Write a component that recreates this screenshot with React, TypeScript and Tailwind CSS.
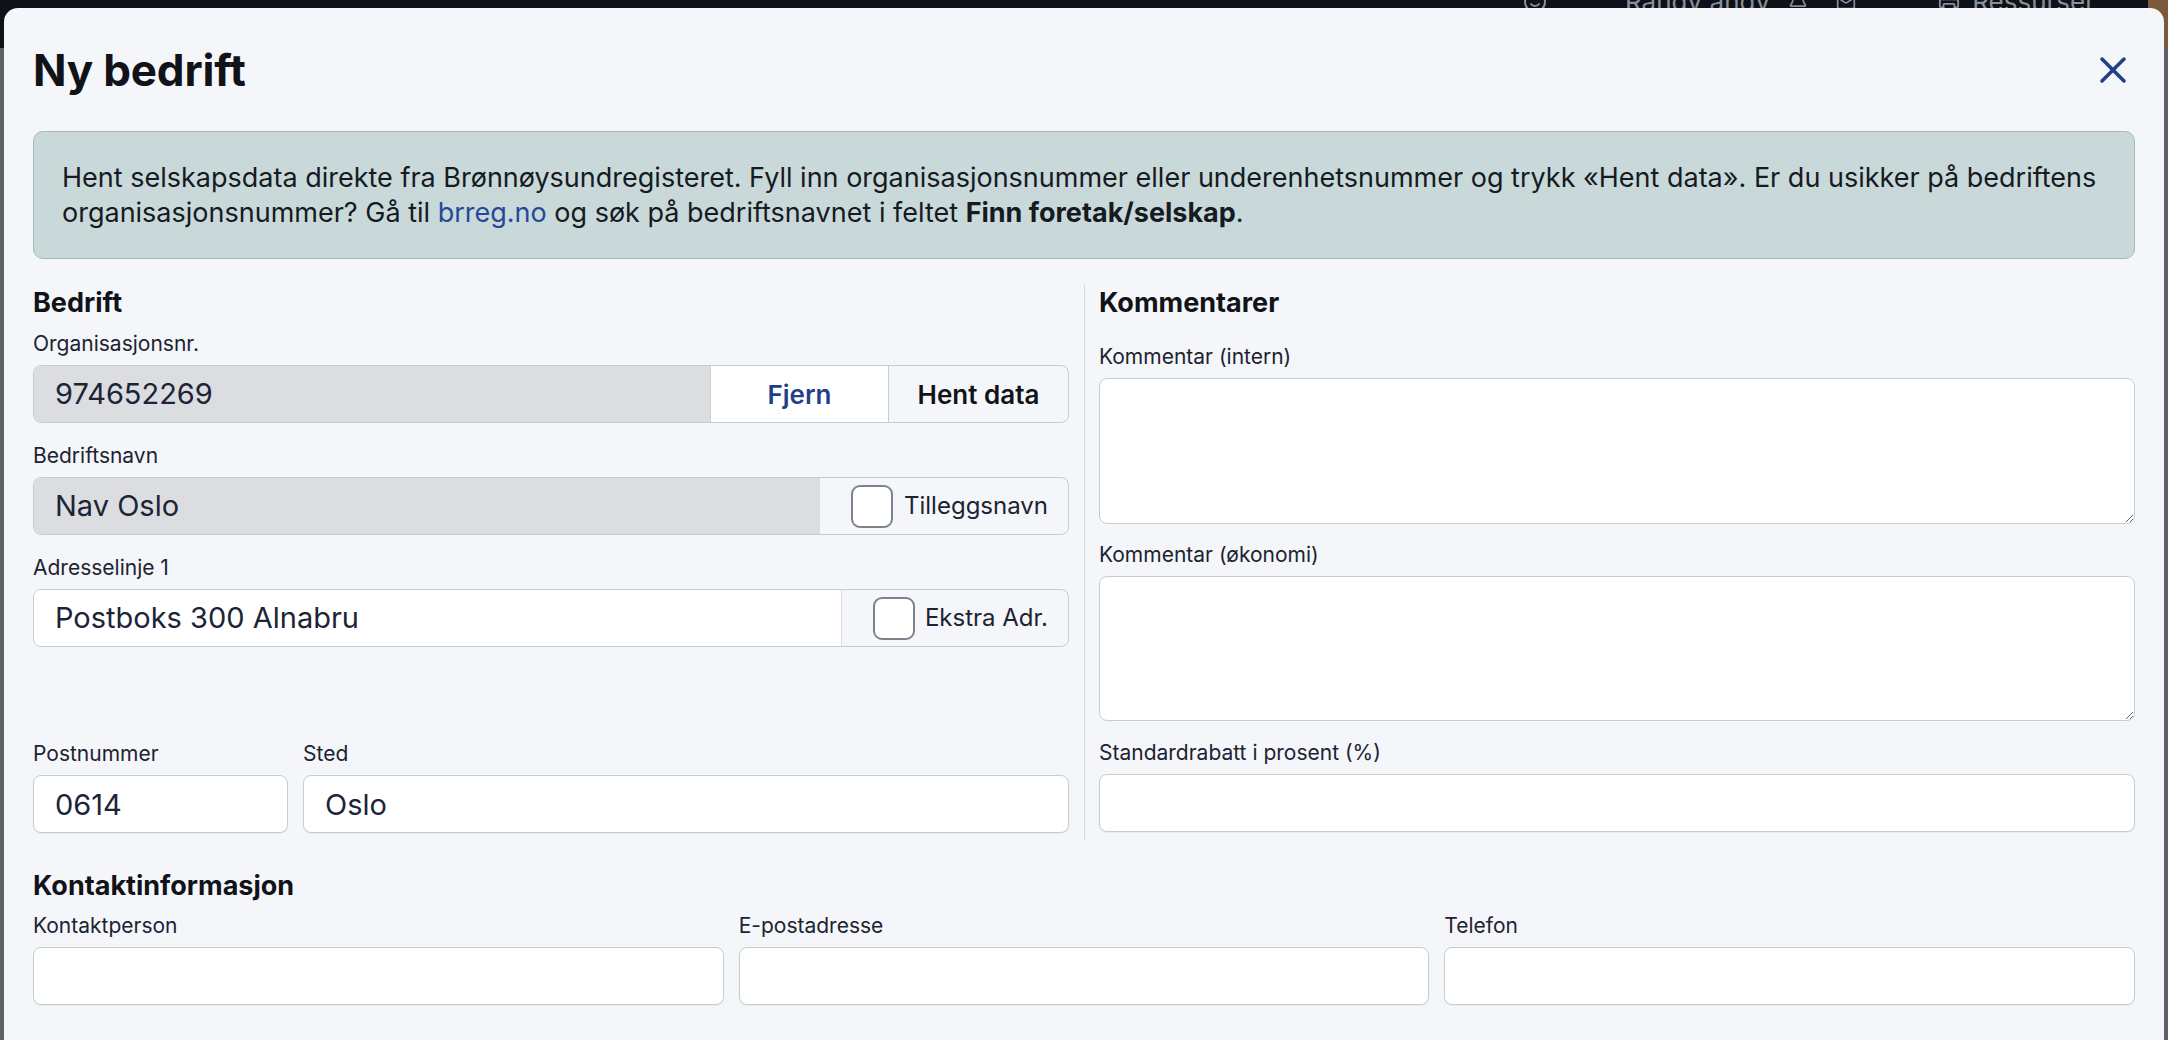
import React from 'react';
import { X, Bell, Mail, Printer, Smile } from 'lucide-react';

const font = { fontFamily: 'Inter, "Noto Sans", sans-serif' };

function Label({ children }: { children: React.ReactNode }) {
  return <label className="block text-[21px] leading-[30px] text-[#1c2333] mb-[6px]">{children}</label>;
}

function TextInput({ value = '', className = '' }: { value?: string; className?: string }) {
  return (
    <input
      readOnly
      value={value}
      className={`w-full h-[58px] rounded-[8px] border border-[#bfd1cf] bg-white px-[21px] text-[29px] text-[#1c2437] shadow-[0_1px_1px_rgba(0,0,0,0.05)] focus:outline-none ${className}`}
    />
  );
}

function Checkbox() {
  return <span className="block w-[42px] h-[43px] rounded-[9px] border-2 border-[#7d838c] bg-white shrink-0"></span>;
}

export default function App() {
  return (
    <div style={font} className="relative w-[2168px] h-[1040px] overflow-hidden bg-[#5d6066]">
      {/* App header behind the dialog */}
      <div className="absolute top-0 left-0 right-0 h-[48px] bg-[#0e1118]">
        <div className="absolute top-[-18px] left-[1523px] flex items-center text-[26px] text-[#8a8f98]">
          <Smile size={24} />
          <span className="ml-[78px]">Randy andy</span>
          <Bell size={20} className="ml-[18px]" />
          <Mail size={20} className="ml-[28px]" />
          <Printer size={22} className="ml-[82px]" />
          <span className="ml-[12px]">Ressurser</span>
        </div>
        <div className="absolute top-0 right-0 w-[20px] h-[48px] bg-[#7a5a3a]"></div>
      </div>

      {/* Dialog */}
      <div className="absolute top-[8px] left-[4px] right-[4px] bottom-[-40px] rounded-[14px] bg-[#f4f6f9] px-[29px] pt-[37px]">
        <div className="flex items-center justify-between">
          <h1 className="text-[44px] leading-[50px] font-bold text-[#111318] tracking-[-0.2px]">Ny bedrift</h1>
          <button className="text-[#1f3f86]">
            <X size={44} strokeWidth={1.9} />
          </button>
        </div>

        <div className="mt-[36px] rounded-[10px] border border-[#a5baba] bg-[#c9d9d9] pl-[28px] pr-[14px] pt-[28px] pb-[28px] text-[27px] leading-[35px] text-[#161a22]">
          <span>
            Hent selskapsdata direkte fra Brønnøysundregisteret. Fyll inn organisasjonsnummer eller underenhetsnummer og trykk
            «Hent data». Er du usikker på bedriftens{' '}
          </span>
          <span>organisasjonsnummer? Gå til </span>
          <a className="text-[#26489a]">brreg.no</a>
          <span> og søk på bedriftsnavnet i feltet </span>
          <strong className="font-bold">Finn foretak/selskap</strong>
          <span>.</span>
        </div>

        <div className="mt-[26px] grid grid-cols-[1036px_1fr] gap-[15px]">
          {/* Bedrift */}
          <div className="flex flex-col pb-[7px]">
            <h2 className="text-[27px] leading-[36px] font-bold text-[#111318] mb-[8px]">Bedrift</h2>

            <Label>Organisasjonsnr.</Label>
            <div className="flex h-[58px] rounded-[8px] border border-[#bfd1cf] overflow-hidden">
              <input
                readOnly
                value="974652269"
                className="flex-1 min-w-0 bg-[#dcdde1] px-[21px] text-[29px] text-[#1c2437] focus:outline-none"
              />
              <button className="w-[178px] bg-white border-l border-[#bfd1cf] text-[26px] font-semibold text-[#1f4089]">Fjern</button>
              <button className="w-[180px] border-l border-[#bfd1cf] text-[26px] font-semibold text-[#111318]">Hent data</button>
            </div>

            <div className="mt-[18px]">
              <Label>Bedriftsnavn</Label>
              <div className="flex h-[58px] rounded-[8px] border border-[#bfd1cf] overflow-hidden">
                <input
                  readOnly
                  value="Nav Oslo"
                  className="flex-1 min-w-0 bg-[#dcdde1] px-[21px] text-[29px] text-[#1c2437] focus:outline-none"
                />
                <div className="w-[249px] flex items-center justify-end gap-[11px] pr-[20px] border-l border-[#d4dde3]">
                  <Checkbox />
                  <span className="text-[24px] text-[#1c2333]">Tilleggsnavn</span>
                </div>
              </div>
            </div>

            <div className="mt-[18px]">
              <Label>Adresselinje 1</Label>
              <div className="flex h-[58px] rounded-[8px] border border-[#bfd1cf] overflow-hidden">
                <input
                  readOnly
                  value="Postboks 300 Alnabru"
                  className="flex-1 min-w-0 bg-white px-[21px] text-[29px] text-[#1c2437] focus:outline-none"
                />
                <div className="w-[227px] flex items-center justify-end gap-[10px] pr-[20px] border-l border-[#d4dde3]">
                  <Checkbox />
                  <span className="text-[24px] text-[#1c2333]">Ekstra Adr.</span>
                </div>
              </div>
            </div>

            <div className="mt-auto flex gap-[15px]">
              <div className="w-[255px]">
                <Label>Postnummer</Label>
                <TextInput value="0614" />
              </div>
              <div className="flex-1">
                <Label>Sted</Label>
                <TextInput value="Oslo" />
              </div>
            </div>
          </div>

          {/* Kommentarer */}
          <div className="border-l border-[#d5d9de] pl-[14px] pb-[8px]">
            <h2 className="text-[27px] leading-[36px] font-bold text-[#111318] mb-[21px]">Kommentarer</h2>

            <Label>Kommentar (intern)</Label>
            <textarea readOnly className="block w-full h-[146px] rounded-[8px] border border-[#bfd1cf] bg-white px-[21px] py-[12px] text-[29px] focus:outline-none" />

            <div className="mt-[16px]">
              <Label>Kommentar (økonomi)</Label>
              <textarea readOnly className="block w-full h-[145px] rounded-[8px] border border-[#bfd1cf] bg-white px-[21px] py-[12px] text-[29px] focus:outline-none" />
            </div>

            <div className="mt-[17px]">
              <Label>Standardrabatt i prosent (%)</Label>
              <TextInput />
            </div>
          </div>
        </div>

        <h2 className="mt-[28px] text-[27px] leading-[36px] font-bold text-[#111318] mb-[7px]">Kontaktinformasjon</h2>
        <div className="grid grid-cols-3 gap-[15px]">
          <div>
            <Label>Kontaktperson</Label>
            <TextInput />
          </div>
          <div>
            <Label>E-postadresse</Label>
            <TextInput />
          </div>
          <div>
            <Label>Telefon</Label>
            <TextInput />
          </div>
        </div>
      </div>
    </div>
  );
}
